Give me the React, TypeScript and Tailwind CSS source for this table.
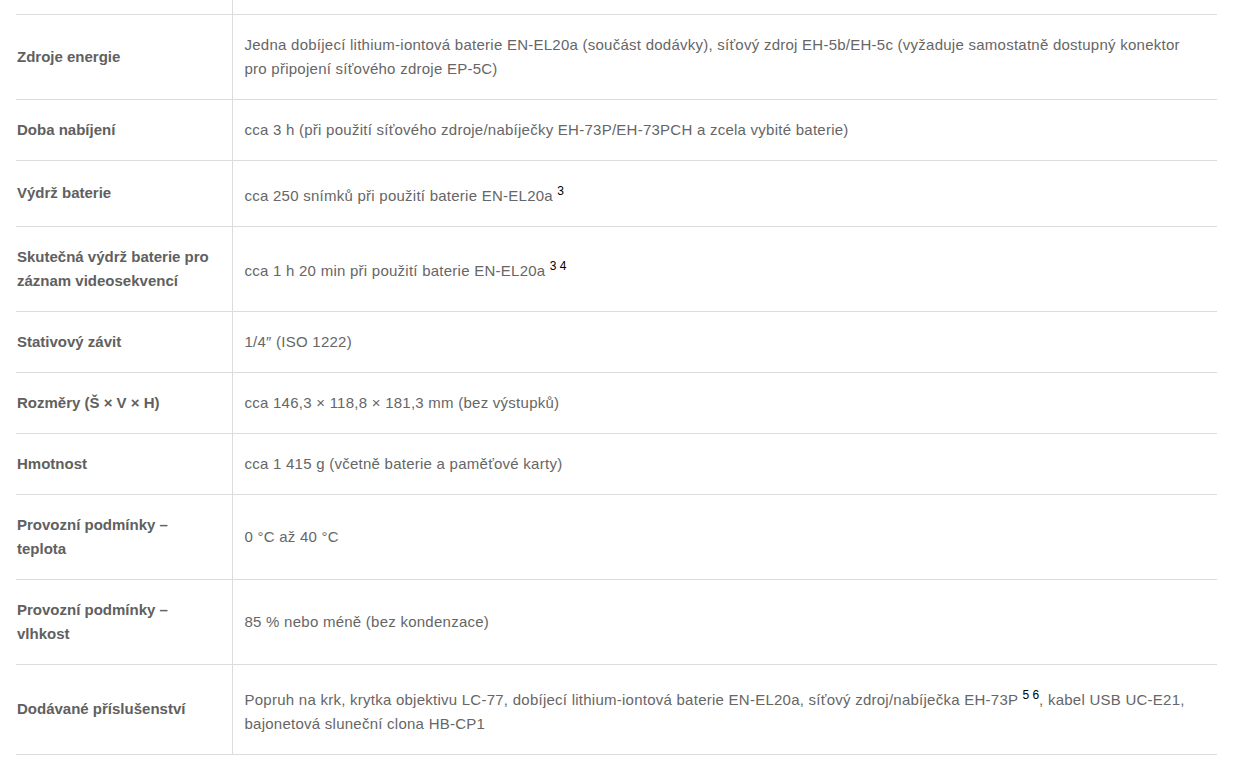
import React from 'react';

type Row = { label: string; value: React.ReactNode };

const Sup = ({ children }: { children: React.ReactNode }) => (
  <sup className="relative top-0 align-[6px] text-[12px] leading-6 tracking-normal text-black">{children}</sup>
);

const rows: Row[] = [
  {
    label: 'Zdroje energie',
    value:
      'Jedna dobíjecí lithium-iontová baterie EN-EL20a (součást dodávky), síťový zdroj EH-5b/EH-5c (vyžaduje samostatně dostupný konektor pro připojení síťového zdroje EP-5C)',
  },
  {
    label: 'Doba nabíjení',
    value: 'cca 3 h (při použití síťového zdroje/nabíječky EH-73P/EH-73PCH a zcela vybité baterie)',
  },
  {
    label: 'Výdrž baterie',
    value: (
      <>
        cca 250 snímků při použití baterie EN-EL20a <Sup>3</Sup>
      </>
    ),
  },
  {
    label: 'Skutečná výdrž baterie pro záznam videosekvencí',
    value: (
      <>
        cca 1 h 20 min při použití baterie EN-EL20a <Sup>3 4</Sup>
      </>
    ),
  },
  { label: 'Stativový závit', value: '1/4″ (ISO 1222)' },
  { label: 'Rozměry (Š × V × H)', value: 'cca 146,3 × 118,8 × 181,3 mm (bez výstupků)' },
  { label: 'Hmotnost', value: 'cca 1 415 g (včetně baterie a paměťové karty)' },
  { label: 'Provozní podmínky – teplota', value: '0 °C až 40 °C' },
  { label: 'Provozní podmínky – vlhkost', value: '85 % nebo méně (bez kondenzace)' },
  {
    label: 'Dodávané příslušenství',
    value: (
      <>
        Popruh na krk, krytka objektivu LC-77, dobíjecí lithium-iontová baterie EN-EL20a, síťový zdroj/nabíječka EH-73P{' '}
        <Sup>5 6</Sup>, kabel USB UC-E21, bajonetová sluneční clona HB-CP1
      </>
    ),
  },
];

export default function App() {
  return (
    <div className="min-h-screen bg-white pl-4 pr-[38px] font-[family-name:'Liberation_Sans',Arial,sans-serif] text-[15px] leading-6 text-[#666]">
      <table className="w-full border-collapse">
        <colgroup>
          <col className="w-[216px]" />
          <col />
        </colgroup>
        <tbody>
          <tr className="border-b border-[#dcdcdc]">
            <td className="h-[14px] border-r border-[#dcdcdc] p-0" />
            <td className="p-0" />
          </tr>
          {rows.map((r) => (
            <tr key={r.label} className="border-b border-[#dcdcdc]">
              <td className="border-r border-[#dcdcdc] py-[18px] pl-px pr-[14px] align-middle font-bold text-[#606060]">
                {r.label}
              </td>
              <td className="py-[18px] pl-3 pr-3 align-middle tracking-[0.25px]">{r.value}</td>
            </tr>
          ))}
        </tbody>
      </table>
    </div>
  );
}
